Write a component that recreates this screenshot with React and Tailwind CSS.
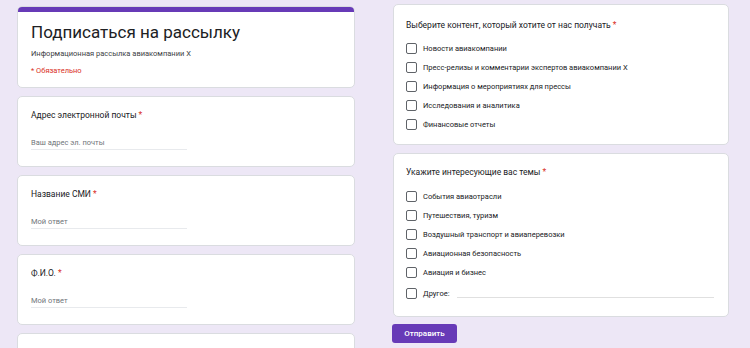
import React from 'react';

const Required = () => <span className="text-[#d93025]"> *</span>;

const Card = ({ className = '', children }) => (
  <div className={`shrink-0 bg-white rounded-[5px] border border-[#dadce0] ${className}`}>{children}</div>
);

const TextQuestion = ({ label, placeholder }) => (
  <Card className="h-[71px] px-[13px] pt-[12px]">
    <div className="text-[8.5px] leading-[12px] text-[#202124]">
      {label}
      <Required />
    </div>
    <div className="mt-[16px] w-[156px] h-[13px] border-b border-[#e8eaed] text-[7.5px] leading-[12px] text-[#70757a]">
      {placeholder}
    </div>
  </Card>
);

const Checkbox = () => (
  <div className="w-[11px] h-[11px] shrink-0 rounded-[2px] border-[1.5px] border-[#5f6368]" />
);

const Option = ({ label, other = false }) => (
  <div className="flex items-center h-[19px]">
    <Checkbox />
    <span className="ml-[6px] text-[7.5px] text-[#202124]">{label}</span>
    {other && <div className="ml-[7px] mt-[8px] w-[257px] border-b border-[#e0e0e0]" />}
  </div>
);

const contentOptions = [
  'Новости авиакомпании',
  'Пресс-релизы и комментарии экспертов авиакомпании Х',
  'Информация о мероприятиях для прессы',
  'Исследования и аналитика',
  'Финансовые отчеты',
];

const topicOptions = [
  'События авиаотрасли',
  'Путешествия, туризм',
  'Воздушный транспорт и авиаперевозки',
  'Авиационная безопасность',
  'Авиация и бизнес',
];

export default function App() {
  return (
    <div
      className="w-[750px] h-[348px] overflow-hidden bg-[#ede7f6] flex pl-[17px] gap-[38px]"
      style={{ fontFamily: 'Roboto, "Liberation Sans", sans-serif' }}
    >
      <div className="w-[338px] pt-[6px] flex flex-col gap-2">
        <Card className="h-[82px] overflow-hidden">
          <div className="h-[5px] bg-[#673ab7]" />
          <div className="px-[13px] pt-[9px]">
            <h1 className="text-[17px] leading-[22px] text-[#202124]">Подписаться на рассылку</h1>
            <div className="mt-[6px] text-[7.5px] leading-[10px] text-[#3c4043]">
              Информационная рассылка авиакомпании Х
            </div>
            <div className="mt-[7px] text-[7.5px] leading-[10px] text-[#d93025]">* Обязательно</div>
          </div>
        </Card>
        <TextQuestion label="Адрес электронной почты" placeholder="Ваш адрес эл. почты" />
        <TextQuestion label="Название СМИ" placeholder="Мой ответ" />
        <TextQuestion label="Ф.И.О." placeholder="Мой ответ" />
        <Card className="h-[40px]" />
      </div>

      <div className="w-[336px] pt-[4px] flex flex-col">
        <Card className="h-[141px] px-[12px] pt-[14px]">
          <div className="text-[8.5px] leading-[12px] text-[#202124]">
            Выберите контент, который хотите от нас получать
            <Required />
          </div>
          <div className="mt-[8px] flex flex-col">
            {contentOptions.map((o) => (
              <Option key={o} label={o} />
            ))}
          </div>
        </Card>
        <Card className="mt-2 h-[164px] px-[12px] pt-[12px]">
          <div className="text-[8.5px] leading-[12px] text-[#202124]">
            Укажите интересующие вас темы
            <Required />
          </div>
          <div className="mt-[9px] flex flex-col">
            {topicOptions.map((o) => (
              <Option key={o} label={o} />
            ))}
            <div className="mt-[2px]">
              <Option label="Другое:" other />
            </div>
          </div>
        </Card>
        <button className="mt-[7px] w-[65px] h-[19px] rounded-[3px] bg-[#673ab7] text-white text-[8px] font-medium -ml-px">
          Отправить
        </button>
      </div>
    </div>
  );
}
